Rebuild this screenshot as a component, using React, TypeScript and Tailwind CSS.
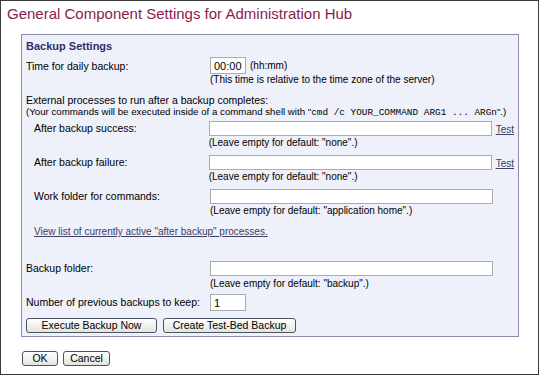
import React from 'react';

function Field({ w = 'w-[283px]', h = 'h-[15px]', value = '' }: { w?: string; h?: string; value?: string }) {
  return (
    <input
      readOnly
      value={value}
      className={`${w} ${h} border border-[#a5acb2] bg-white px-[3px] text-[11px] leading-[14px] text-black outline-none`}
    />
  );
}

function Button({ label, w }: { label: string; w: string }) {
  return (
    <button
      className={`${w} h-[15px] rounded-[3px] border border-[#4b5364] bg-gradient-to-b from-white to-[#e4e4dc] text-[10.5px] leading-[13px] text-black`}
    >
      {label}
    </button>
  );
}

export default function App() {
  const commandRows = [
    { label: 'After backup success:', hint: '(Leave empty for default: "none".)', test: true },
    { label: 'After backup failure:', hint: '(Leave empty for default: "none".)', test: true },
    { label: 'Work folder for commands:', hint: '(Leave empty for default: "application home".)', test: false },
  ];

  return (
    <div className="w-[539px] h-[375px] border border-[#3a3a3a] bg-white text-black font-['Liberation_Sans',Arial,sans-serif] overflow-hidden">
      {/* Title */}
      <div className="pl-[6px] pt-[4px] h-[33px] text-[15px] leading-[18px] text-[#8a1c4c]">
        General Component Settings for Administration Hub
      </div>

      {/* Settings panel */}
      <div className="ml-[20px] w-[498px] h-[303px] border border-[#8d8caf] bg-[#eef0fa] px-[4px] pt-[4px]">
        <div className="text-[11px] font-bold leading-[14px] text-[#2e2f6b]">Backup Settings</div>

        <div className="mt-[4px] flex text-[10.5px]">
          <div className="w-[184px] pt-[3px] leading-[13px]">Time for daily backup:</div>
          <div>
            <div className="flex items-center gap-[4px]">
              <Field w="w-[36px]" h="h-[17px]" value="00:00" />
              <span className="text-[10px]">(hh:mm)</span>
            </div>
            <div className="text-[10px] leading-[12px]">(This time is relative to the time zone of the server)</div>
          </div>
        </div>

        <div className="mt-[8px] text-[10.5px] leading-[12px]">External processes to run after a backup completes:</div>
        <div className="whitespace-nowrap text-[9.7px] leading-[12px]">
          (Your commands will be executed inside of a command shell with "
          <span className="font-['Liberation_Mono',monospace] text-[9.4px]">cmd /c YOUR_COMMAND ARG1 ... ARGn</span>".)
        </div>

        <div className="mt-[2px] flex flex-col gap-[6px]">
          {commandRows.map((row, index) => (
            <div key={index} className="flex pl-[8px] text-[10.5px]">
              <div className="w-[176px] pt-[1px] leading-[13px]">{row.label}</div>
              <div>
                <div className="flex items-end gap-[4px]">
                  <Field />
                  {row.test && <span className="text-[10px] leading-[12px] text-[#3a3f5c] underline">Test</span>}
                </div>
                <div className="text-[10px] leading-[13px]">{row.hint}</div>
              </div>
            </div>
          ))}
        </div>

        <div className="mt-[8px] pl-[8px] text-[10px] leading-[13px] text-[#3c4166] underline">
          View list of currently active "after backup" processes.
        </div>

        <div className="mt-[23px] flex text-[10.5px]">
          <div className="w-[184px] pt-[1px] leading-[13px]">Backup folder:</div>
          <div>
            <Field />
            <div className="text-[10px] leading-[13px]">(Leave empty for default: "backup".)</div>
          </div>
        </div>

        <div className="mt-[4px] flex items-center text-[10.5px]">
          <div className="w-[184px] leading-[13px]">Number of previous backups to keep:</div>
          <Field w="w-[36px]" h="h-[17px]" value="1" />
        </div>

        <div className="mt-[7px] flex gap-[6px]">
          <Button label="Execute Backup Now" w="w-[131px]" />
          <Button label="Create Test-Bed Backup" w="w-[133px]" />
        </div>
      </div>

      {/* Dialog buttons */}
      <div className="mt-[14px] ml-[21px] flex gap-[5px]">
        <Button label="OK" w="w-[36px]" />
        <Button label="Cancel" w="w-[47px]" />
      </div>
    </div>
  );
}
